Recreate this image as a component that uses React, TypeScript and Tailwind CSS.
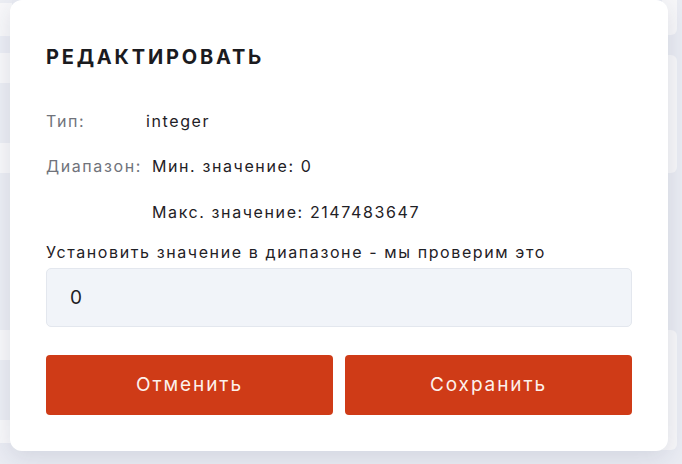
import { useState } from "react";

// background rows peeking out on the left behind the dialog
const leftRows = [
  { h: "h-[3px]", bg: "bg-[#eceef4]" },
  { h: "h-[33px]", bg: "bg-[#f8f8fa]" },
  { h: "h-[17px]", bg: "bg-[#eceef5]" },
  { h: "h-[30px]", bg: "bg-[#f8f8fa]" },
  { h: "h-[60px]", bg: "bg-[#eceef4]" },
  { h: "h-[30px]", bg: "bg-[#f8f8fa]" },
  { h: "h-[157px]", bg: "bg-[#eceef4]" },
  { h: "h-[30px]", bg: "bg-[#f8f8fa]" },
  { h: "h-[60px]", bg: "bg-[#eceef4]" },
  { h: "h-[23px]", bg: "bg-[#f8f8fa]" },
];

function Background() {
  return (
    <div className="flex h-full w-full justify-between">
      <div className="flex w-[12px] flex-col">
        {leftRows.map((r, i) => (
          <div key={i} className={`${r.h} ${r.bg}`} />
        ))}
      </div>
      <div className="flex w-[20px] flex-col pr-[5px]">
        <div className="h-[35px] rounded-br-[6px] bg-[#f7f7f9]" />
        <div className="mt-[20px] h-[118px] rounded-r-[6px] bg-[#f7f7f9]" />
        <div className="mt-[157px] h-[120px] rounded-r-[6px] bg-[#f7f7f9]" />
      </div>
    </div>
  );
}

export default function App() {
  const [value, setValue] = useState("0");

  return (
    <div className="relative h-[464px] w-[682px] overflow-hidden bg-[#eaecf3] font-['Inter',sans-serif]">
      <Background />

      {/* dialog */}
      <div className="absolute left-[10px] top-0 flex h-[451px] w-[658px] flex-col rounded-[12px] bg-white px-[36px] pt-[45px] shadow-[0_6px_24px_rgba(30,40,80,0.12)]">
        <h2 className="text-[20px] font-bold leading-[24px] tracking-[0.14em] text-[#1b1b1f]">
          РЕДАКТИРОВАТЬ
        </h2>

        <div className="mt-[40px] flex text-[16px] leading-[24px] tracking-[0.1em]">
          <span className="w-[100px] text-[#70737b]">Тип:</span>
          <span className="text-[#1f2126]">integer</span>
        </div>

        <div className="mt-[21px] flex text-[16px] leading-[24px] tracking-[0.1em]">
          <span className="mr-[10px] text-[#70737b]">Диапазон:</span>
          <span className="text-[#1f2126]">Мин. значение: 0</span>
        </div>

        <div className="mt-[22px] pl-[106px] text-[16px] leading-[24px] tracking-[0.1em] text-[#1f2126]">
          Макс. значение: 2147483647
        </div>

        <label className="mt-[16px] block text-[16px] leading-[24px] tracking-[0.1em] text-[#1f2126]">
          Установить значение в диапазоне - мы проверим это
        </label>

        <input
          value={value}
          onChange={(e) => setValue(e.target.value)}
          className="mt-[4px] h-[59px] w-full rounded-[5px] border border-[#e3e7ee] bg-[#f1f4f9] px-[23px] text-[19px] text-[#1f2126] outline-none"
        />

        <div className="mt-[28px] grid grid-cols-2 gap-[12px]">
          <button className="h-[60px] rounded-[4px] bg-[#cf3b17] text-[19px] tracking-[0.1em] text-[#fdf1ec]">
            Отменить
          </button>
          <button className="h-[60px] rounded-[4px] bg-[#cf3b17] text-[19px] tracking-[0.1em] text-[#fdf1ec]">
            Сохранить
          </button>
        </div>
      </div>
    </div>
  );
}
